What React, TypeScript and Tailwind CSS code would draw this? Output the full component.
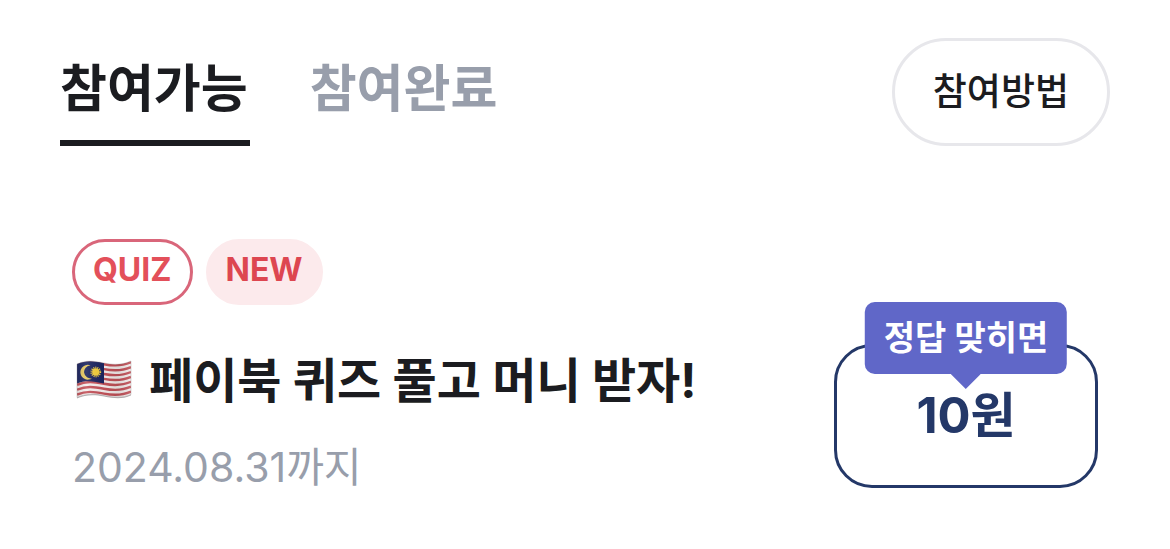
import React from "react";

function MalaysiaFlag() {
  const wave = (y: number) =>
    `M2 ${y + 2} C11 ${y - 2} 19 ${y - 1} 29 ${y + 1} S47 ${y + 3} 56 ${y - 1}`;
  const stripes = [3.2, 8.1, 13, 17.9, 22.8, 27.7, 32.6];
  const outline =
    "M2 4 C11 0 19 1 29 3 S47 5 56 1 V34.5 C47 38.5 39 37.5 29 35.5 S11 33.5 2 37.5 Z";
  return (
    <svg viewBox="0 0 58 42" className="h-[42px] w-[58px] shrink-0" role="img" aria-label="말레이시아 국기">
      <defs>
        <clipPath id="flag-shape">
          <path d={outline} />
        </clipPath>
        <linearGradient id="flag-shade" x1="0" x2="1" y1="0" y2="0">
          <stop offset="0" stopColor="#000" stopOpacity="0.12" />
          <stop offset="0.2" stopColor="#fff" stopOpacity="0.1" />
          <stop offset="0.5" stopColor="#000" stopOpacity="0.04" />
          <stop offset="0.75" stopColor="#000" stopOpacity="0.1" />
          <stop offset="1" stopColor="#fff" stopOpacity="0.12" />
        </linearGradient>
      </defs>
      <path d={outline} fill="#b9b4b6" transform="translate(0 1)" />
      <g clipPath="url(#flag-shape)">
        <rect width="58" height="42" fill="#f6efee" />
        {stripes.map((y) => (
          <path key={y} d={wave(y)} fill="none" stroke="#c4525a" strokeWidth="2.4" />
        ))}
        <path d="M2 3 C11 -1 19 1 29 3 V23.5 C19 21.5 11 19.5 2 23.5 Z" fill="#1c2560" />
        <path d="M15.5 5.4 A7.4 7.4 0 1 0 17.2 18.2 A6.5 6.5 0 1 1 15.5 5.4 Z" fill="#e6c860" />
        <circle cx="20.8" cy="12" r="3.7" fill="#f4cf3c" />
        <circle cx="20.8" cy="12" r="4.5" fill="none" stroke="#f4cf3c" strokeWidth="1.8" strokeDasharray="1 1.02" />
        <rect width="58" height="42" fill="url(#flag-shade)" />
      </g>
      <path d={outline} fill="none" stroke="#8b8587" strokeOpacity="0.4" strokeWidth="0.8" />
    </svg>
  );
}

export default function App() {
  return (
    <main className="bg-white pb-[52px] font-['Inter','Noto_Sans_CJK_KR',sans-serif] text-[#1b1c20]">
      <header className="flex items-end justify-between px-[60px] pt-[38px]">
        <nav className="flex gap-[60px]" aria-label="퀴즈 참여 상태">
          <button type="button" aria-current="page" className="border-b-6 border-[#1b1c20] pr-[2px] pb-[15px] text-[51px] leading-[72px] font-bold">
            참여가능
          </button>
          <button type="button" className="border-b-6 border-transparent pr-[2px] pb-[15px] text-[51px] leading-[72px] font-bold text-[#989eab]">
            참여완료
          </button>
        </nav>
        <button type="button" className="rounded-full border-3 border-[#e7e7eb] px-[38px] py-[25px] text-[37px] leading-[52px] font-medium">
          참여방법
        </button>
      </header>

      <article className="mt-[93px] flex items-end justify-between px-[72px]">
        <div>
          <div className="flex gap-[13px]">
            <span className="rounded-full border-3 border-[#d9667a] px-[18px] pt-[5px] pb-[9px] text-[32px] leading-[46px] font-bold text-[#e3505a]">
              QUIZ
            </span>
            <span className="rounded-full border-3 border-[#fceaec] bg-[#fceaec] px-[17px] pt-[5px] pb-[9px] text-[32px] leading-[46px] font-bold text-[#dd4650]">
              NEW
            </span>
          </div>
          <h2 className="mt-10 flex items-center gap-4 pl-[3px] text-[48px] leading-[72px] font-bold">
            <MalaysiaFlag />
            <span>페이북 퀴즈 풀고 머니 받자!</span>
          </h2>
          <p className="mt-5 text-[41px] leading-[60px] text-[#989eab]">2024.08.31까지</p>
        </div>

        <div className="relative mb-[9px]">
          <button type="button" className="h-[144px] w-[264px] rounded-[38px] border-3 border-[#243868] text-[49px] leading-[72px] font-bold text-[#243868]">
            10원
          </button>
          <div className="absolute -top-[42px] left-1/2 -translate-x-1/2 rounded-[10px] bg-[#6067c8] px-[19px] py-[10px] text-[34px] leading-[52px] font-bold whitespace-nowrap text-white">
            정답 맞히면
            <svg viewBox="0 0 30 15" className="absolute top-full left-1/2 h-[15px] w-[30px] -translate-x-1/2" aria-hidden="true">
              <path d="M0 0H30L15 15Z" fill="#6067c8" />
            </svg>
          </div>
        </div>
      </article>
    </main>
  );
}
